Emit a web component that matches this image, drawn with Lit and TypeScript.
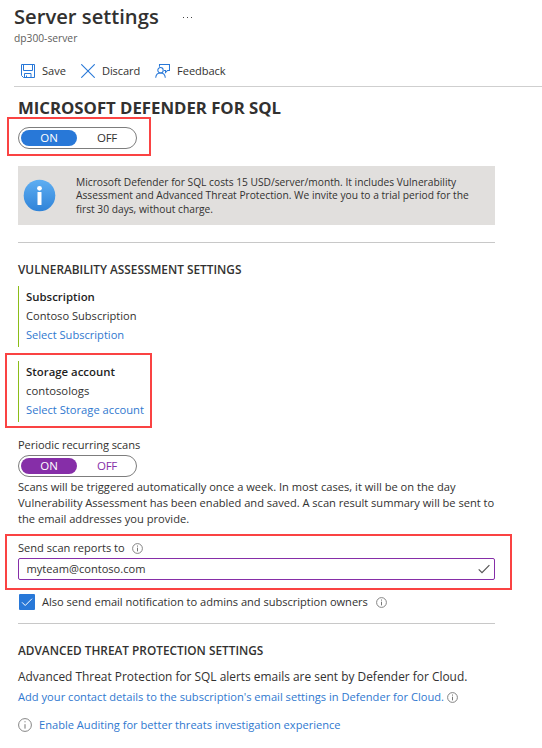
import { LitElement, html, css, svg } from "lit";
import { customElement, property } from "lit/decorators.js";
import { classMap } from "lit/directives/class-map.js";

@customElement("info-glyph")
class InfoGlyph extends LitElement {
  @property({ type: Number }) size = 12;
  static styles = css`
    :host { display: flex; flex: none; }
    svg { display: block; fill: none; stroke: #777; }
  `;
  render() {
    const s = this.size;
    const c = s / 2;
    return html`<svg width=${s} height=${s} viewBox="0 0 ${s} ${s}">
      ${svg`<circle cx=${c} cy=${c} r=${c - 0.6} stroke-width="0.9"/>
      <path d="M${c} ${c - 0.8}V${c + s * 0.26}M${c} ${c - s * 0.27}v1.1" stroke-width="1"/>`}
    </svg>`;
  }
}

@customElement("on-off-toggle")
class OnOffToggle extends LitElement {
  @property() tone = "blue";
  static styles = css`
    :host { display: block; }
    .track {
      box-sizing: border-box; width: 119px; height: 22px; padding: 2px;
      border: 1px solid #7d7d7d; border-radius: 11px; display: flex;
      font-size: 11.5px; line-height: 16px; text-align: center; color: #323130;
    }
    .on { flex: none; width: 56px; height: 16px; border-radius: 8px; background: #2878d8; color: #fff; }
    .off { flex: none; width: 60px; letter-spacing: -0.2px; }
    .purple .on { background: #862ea8; }
    .purple .off { color: #862ea8; }
  `;
  render() {
    return html`<div class=${classMap({ track: true, purple: this.tone === "purple" })}>
      <span class="on">ON</span><span class="off">OFF</span>
    </div>`;
  }
}

@customElement("app-root")
class AppRoot extends LitElement {
  static styles = css`
    :host {
      display: block; box-sizing: border-box; width: 542px; height: 748px; overflow: hidden;
      background: #fff; color: #323130; white-space: nowrap;
      font-family: "Open Sans", "Noto Sans", sans-serif; font-size: 11.1px; line-height: 16px;
    }
    svg { display: block; flex: none; }
    .top { padding-left: 14px; }
    .title { display: flex; height: 32px; line-height: 32px; font-size: 20.2px; font-weight: 600; }
    .dots { display: flex; gap: 3px; padding: 17px 0 0 24px; }
    .dots i { width: 1px; height: 1px; background: #444; }
    .sub { height: 12px; line-height: 12px; font-size: 10.25px; color: #605e5c; }
    .bar { display: flex; align-items: center; height: 28px; margin-top: 13px; padding: 0 0 1px 7px; border-bottom: 1px solid #cfcfcf; }
    .save { margin: 0 15px 0 7px; }
    .discard { margin: 0 15px 0 7px; letter-spacing: -0.13px; }
    .feedback { margin-left: 7px; letter-spacing: -0.07px; }
    main { width: 477px; padding-left: 18px; }
    h1 { margin: 10px 0 0; height: 22px; line-height: 22px; font-size: 16.8px; font-weight: 700; letter-spacing: -0.03px; }
    .marked { position: relative; }
    .marked::after { content: ""; position: absolute; border: 2px solid #fa4343; pointer-events: none; }
    .power { width: 119px; margin-top: 8px; }
    .power::after { inset: -10px -14px -7px -11px; }
    .notice {
      box-sizing: border-box; display: flex; align-items: center; gap: 20px; height: 59px;
      margin: 17px 0; padding-left: 5px; background: #e1dfdd;
    }
    .notice p { margin: 1px 0 0; font-size: 10.22px; line-height: 13.6px; }
    hr { margin: 0; height: 1px; border: 0; background: #c8c8c8; }
    h2 { margin: 18px 0 9px; height: 16px; font-size: 11.84px; font-weight: 600; }
    .resource { box-sizing: border-box; height: 61px; padding: 1px 0 0 7px; border-left: 1px solid #8cbd18; line-height: 19px; }
    .resource b { display: block; font-size: 11.4px; font-weight: 600; color: #1f1f1f; }
    .resource span, .resource a { display: block; }
    a { color: #2f78cf; }
    .storage { width: 126px; margin-top: 14px; }
    .storage::after { inset: -8px -8px -6px -14px; }
    .storage a { font-size: 11.18px; }
    .name { font-size: 11.3px; }
    .periodic { margin: 15px 0 2px; letter-spacing: -0.08px; }
    .scans { margin: 2px 0 0; font-size: 11.14px; }
    .tight { letter-spacing: -0.03px; }
    .mail { margin-top: 13px; }
    .mail::after { inset: -6px -17px -10px -13px; }
    .label { display: flex; align-items: center; gap: 7px; height: 16px; }
    .field {
      box-sizing: border-box; display: flex; align-items: center; justify-content: space-between;
      height: 22px; margin-top: 2px; padding: 0 4px 0 7.5px; border: 1px solid #862ea8; border-radius: 2px;
    }
    .admins { display: flex; align-items: center; height: 16px; margin: 14px 0 13px 1px; }
    .box { width: 16px; height: 16px; background: #2878d8; border-radius: 1px; }
    .admins span { margin: 0 8px 0 7px; letter-spacing: -0.02px; }
    .sent { height: 18px; line-height: 18px; font-size: 11.92px; }
    .contact { display: flex; align-items: center; gap: 3px; margin-top: 4px; height: 16px; }
    .contact a { font-size: 11.13px; }
    .audit { display: flex; align-items: center; gap: 7px; margin-top: 12px; height: 16px; }
  `;

  render() {
    return html`
      <div class="top">
        <div class="title">Server settings<span class="dots"><i></i><i></i><i></i></span></div>
        <div class="sub">dp300-server</div>
        <div class="bar">
          <svg width="14" height="14" viewBox="0 0 14 14" fill="none" stroke="#2878d8">
            <path d="M.5 .5h13v13h-11l-2-2zM2.5 .5v6h9v-6M3.5 13.5v-4h6.500v4M5.500 13.500v-2"/>
          </svg>
          <span class="save">Save</span>
          <svg width="14" height="14" viewBox="0 0 14 14" fill="none" stroke="#2878d8" stroke-width="1.1">
            <path d="M.3 .3l13.400 13.400M13.700 .3l-13.400 13.400"/>
          </svg>
          <span class="discard">Discard</span>
          <svg width="15" height="14" viewBox="0 0 15 14" fill="none" stroke="#2878d8" stroke-width="1.050">
            <path d="M4.500 2.800v-2.300h10v6h-2l-2 2v-2h-1.500"/>
            <circle cx="5.500" cy="6.200" r="2.700"/>
            <path d="M.7 13.700c.2-3 2-4.800 4.800-4.800s4.600 1.800 4.800 4.800"/>
          </svg>
          <span class="feedback">Feedback</span>
        </div>
      </div>
      <main>
        <h1>MICROSOFT DEFENDER FOR SQL</h1>
        <div class="power marked"><on-off-toggle></on-off-toggle></div>
        <div class="notice">
          <svg width="33" height="33" viewBox="0 0 33 33">
            <defs><linearGradient id="g" x1="0" y1="0" x2="0" y2="1">
              <stop offset="0" stop-color="#5eaef2"/><stop offset="1" stop-color="#2f83d8"/>
            </linearGradient></defs>
            <circle cx="16.500" cy="16.500" r="15.800" fill="url(#g)"/>
            <circle cx="16.500" cy="9.300" r="2.400" fill="#fff"/>
            <rect x="14.500" y="13" width="4" height="13" rx=".6" fill="#fff"/>
          </svg>
          <p>Microsoft Defender for SQL costs 15 USD/server/month. It includes Vulnerability<br>Assessment and Advanced Threat Protection. We invite you to a trial period for the<br>first 30 days, without charge.</p>
        </div>
        <hr>
        <h2>VULNERABILITY ASSESSMENT SETTINGS</h2>
        <div class="resource"><b>Subscription</b><span>Contoso Subscription</span><a>Select Subscription</a></div>
        <div class="resource storage marked"><b>Storage account</b><span class="name">contosologs</span><a>Select Storage account</a></div>
        <div class="periodic">Periodic recurring scans</div>
        <on-off-toggle tone="purple"></on-off-toggle>
        <p class="scans">Scans will be triggered automatically once a week. In most cases, it will be on the day<br><span class="tight">Vulnerability Assessment has been enabled and saved. A scan result summary will be sent to</span><br>the email addresses you provide.</p>
        <div class="mail marked">
          <div class="label">Send scan reports to<info-glyph .size=${11}></info-glyph></div>
          <div class="field">myteam@contoso.com
            <svg width="12" height="10" viewBox="0 0 12 10" fill="none" stroke="#555" stroke-width="1.200"><path d="M.7 5.300l3.300 3.300 7.400-7.400"/></svg>
          </div>
        </div>
        <div class="admins">
          <svg class="box" viewBox="0 0 16 16" fill="none" stroke="#fff"><path d="M3 8.300l3.200 3.200 6.800-6.800"/></svg>
          <span>Also send email notification to admins and subscription owners</span>
          <info-glyph .size=${11}></info-glyph>
        </div>
        <hr>
        <h2>ADVANCED THREAT PROTECTION SETTINGS</h2>
        <div class="sent">Advanced Threat Protection for SQL alerts emails are sent by Defender for Cloud.</div>
        <div class="contact"><a>Add your contact details to the subscription's email settings in Defender for Cloud.</a><info-glyph .size=${11}></info-glyph></div>
        <div class="audit"><info-glyph .size=${14}></info-glyph><a>Enable Auditing for better threats investigation experience</a></div>
      </main>
    `;
  }
}
